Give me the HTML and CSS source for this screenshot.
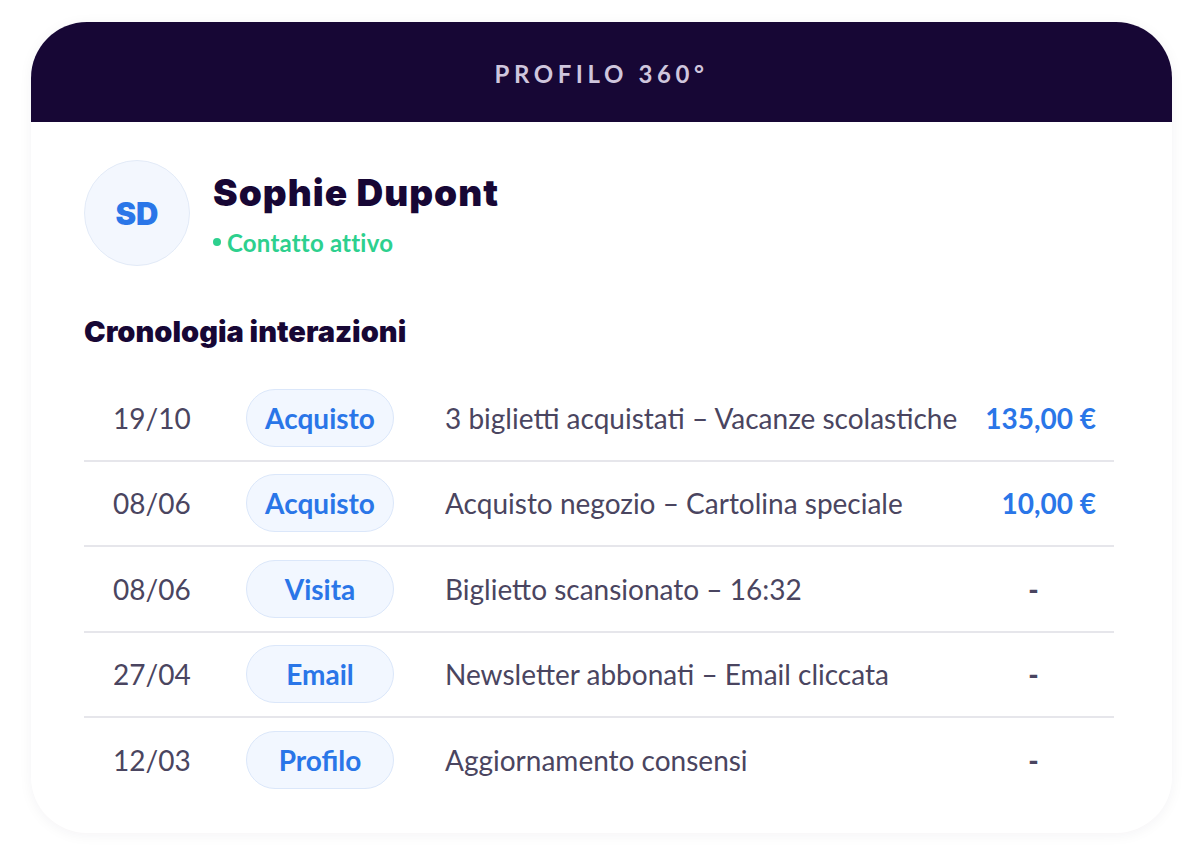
FILE: index.html
```html
<!DOCTYPE html>
<html lang="it">
  <head>
    <meta charset="UTF-8" />
    <meta name="viewport" content="width=device-width, initial-scale=1.0" />
    <title>Profilo 360°</title>

    <link rel="stylesheet" href="styles.css">
  </head>
  <body>
    <section class="card">
      <header class="card-head">PROFILO 360°</header>

      <div class="card-body">
        <div class="contact">
          <div class="avatar">SD</div>
          <div class="contact-info">
            <h1 class="name">Sophie Dupont</h1>
            <div class="status"><span class="dot"></span>Contatto attivo</div>
          </div>
        </div>

        <h2 class="section-title">Cronologia interazioni</h2>

        <div class="timeline">
          <div class="row">
            <span class="date">19/10</span>
            <span class="tag">Acquisto</span>
            <span class="desc">3 biglietti acquistati – Vacanze scolastiche</span>
            <span class="amount">135,00 €</span>
          </div>
          <div class="row">
            <span class="date">08/06</span>
            <span class="tag">Acquisto</span>
            <span class="desc">Acquisto negozio – Cartolina speciale</span>
            <span class="amount">10,00 €</span>
          </div>
          <div class="row">
            <span class="date">08/06</span>
            <span class="tag">Visita</span>
            <span class="desc">Biglietto scansionato – 16:32</span>
            <span class="amount none">-</span>
          </div>
          <div class="row">
            <span class="date">27/04</span>
            <span class="tag">Email</span>
            <span class="desc">Newsletter abbonati – Email cliccata</span>
            <span class="amount none">-</span>
          </div>
          <div class="row">
            <span class="date">12/03</span>
            <span class="tag">Profilo</span>
            <span class="desc">Aggiornamento consensi</span>
            <span class="amount none">-</span>
          </div>
        </div>
      </div>
    </section>
  </body>
</html>
```

FILE: styles.css
```css
body {
  background: #fff;
  color: #4a4560;
  font-family: Lato, "Open Sans", sans-serif;
  margin: 0;
  padding: 22px 28px 21px 31px;
}

.card {
  background: #fff;
  border-radius: 56px;
  box-shadow: 0 2px 14px rgba(30, 20, 60, 0.05);
  overflow: hidden;
}

.card-head {
  align-items: center;
  background: #170735;
  box-sizing: border-box;
  color: #cfc6dd;
  display: flex;
  font-size: 24px;
  font-weight: 700;
  height: 100px;
  justify-content: center;
  letter-spacing: 4.6px;
  padding-top: 3px;
}

.card-body {
  padding: 38px 58px 31px 53px;
}

.contact {
  align-items: center;
  display: flex;
  gap: 23px;
}

.contact-info {
  padding-top: 4px;
}

.avatar {
  align-items: center;
  background: #f3f7fe;
  border: 1px solid #e2eaf7;
  border-radius: 50%;
  color: #2a76e8;
  display: flex;
  font-family: Inter, sans-serif;
  font-size: 31px;
  font-weight: 900;
  height: 104px;
  justify-content: center;
  width: 104px;
}

.name {
  color: #170735;
  font-family: Inter, sans-serif;
  font-size: 37px;
  font-weight: 900;
  letter-spacing: 1px;
  line-height: 1;
  margin: 0 0 17px;
}

.status {
  align-items: center;
  color: #2dd08e;
  display: flex;
  font-size: 24px;
  font-weight: 700;
  gap: 6px;
  letter-spacing: 0.2px;
}

.dot {
  background: #2dd08e;
  border-radius: 50%;
  height: 8px;
  width: 8px;
}

.section-title {
  color: #170735;
  font-family: Inter, sans-serif;
  font-size: 29px;
  font-weight: 900;
  margin: 48px 0 27px;
}

.row {
  align-items: center;
  border-bottom: 2px solid #e6e6eb;
  display: grid;
  grid-template-columns: 133px 199px 1fr 125px;
  height: 83.5px;
  padding: 0 18px 0 29px;
}

.row:last-child {
  border-bottom: none;
}

.date {
  font-size: 28px;
}

.tag {
  background: #f2f7ff;
  border: 1px solid #dbe7fa;
  border-radius: 29px;
  color: #2a76e8;
  font-size: 28px;
  font-weight: 700;
  line-height: 56px;
  text-align: center;
  width: 146px;
}

.desc {
  font-size: 28px;
}

.amount {
  color: #2a76e8;
  font-size: 28px;
  font-weight: 700;
  text-align: right;
}

.amount.none {
  color: #4a4560;
  font-weight: 900;
  text-align: center;
}
```
